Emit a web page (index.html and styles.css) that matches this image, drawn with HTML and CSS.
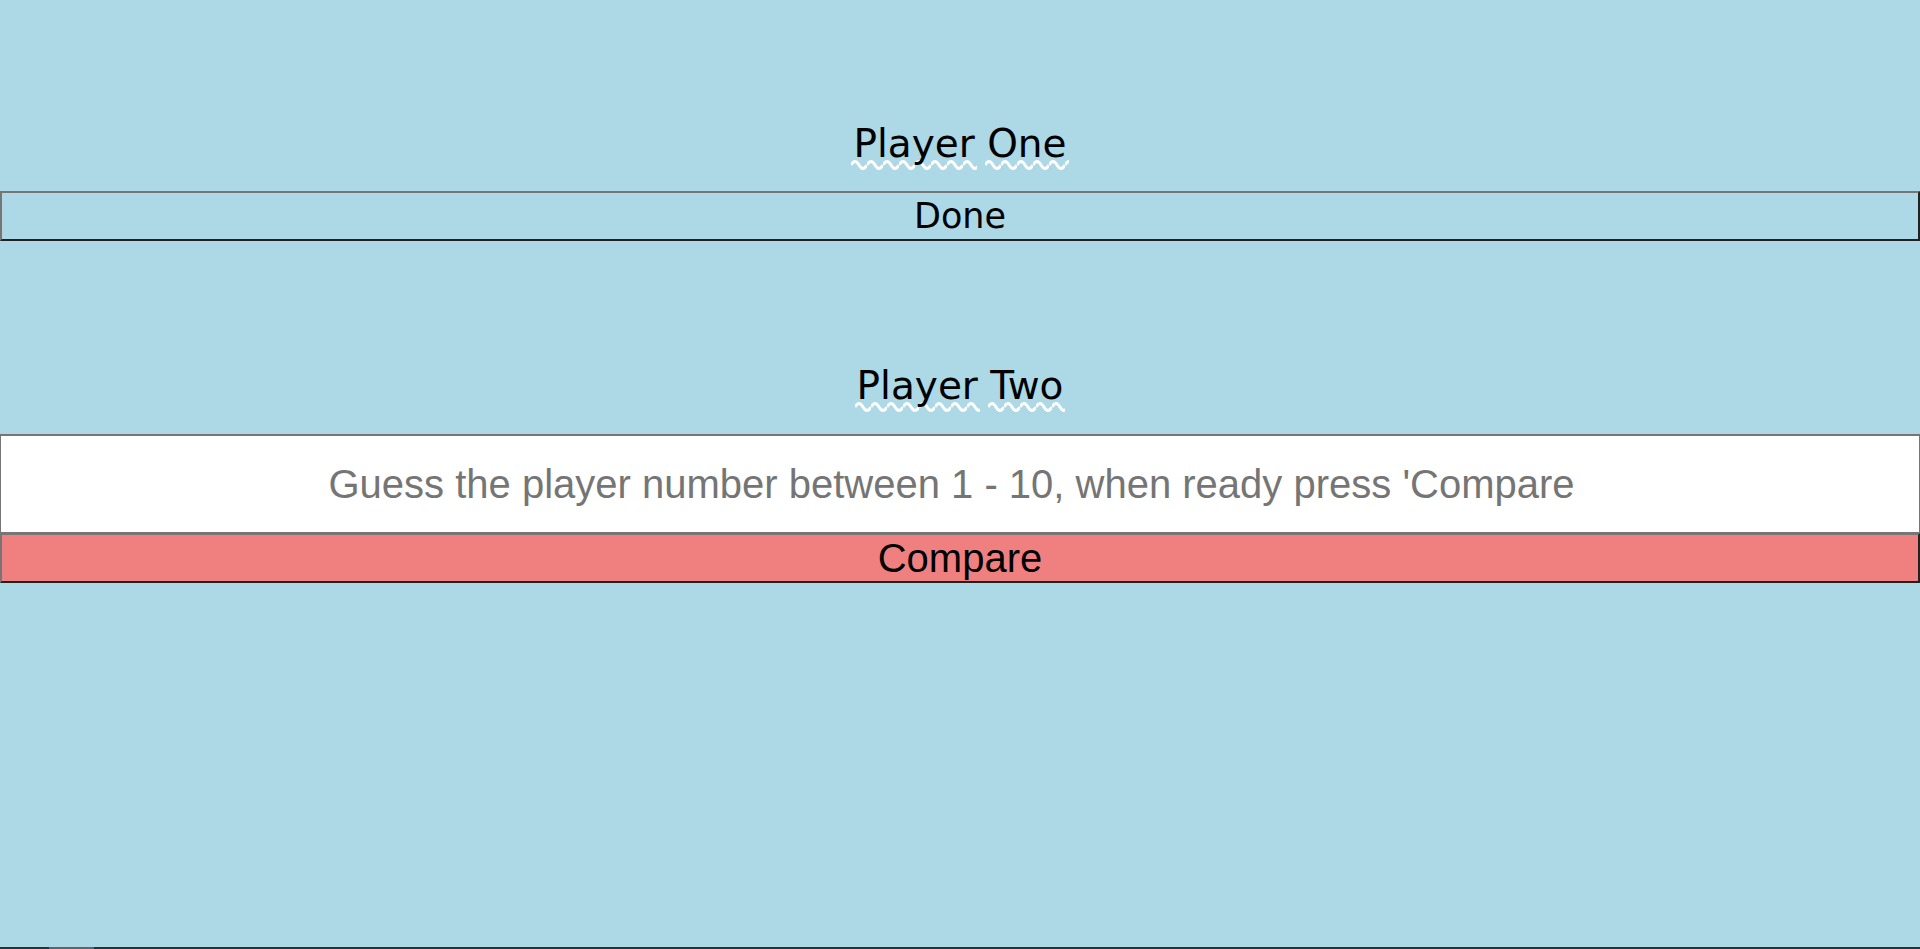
FILE: index.html
```html
<!DOCTYPE html>
<html lang="en">
<head>
<meta charset="utf-8">
<title>Guess the number</title>
<link rel="stylesheet" href="styles.css">
</head>
<body>
<main class="game">
  <section class="player player-one">
    <h2 class="title"><span class="word">Player</span> <span class="word">One</span></h2>
    <button class="btn btn-done" type="button">Done</button>
  </section>
  <section class="player player-two">
    <h2 class="title"><span class="word">Player</span> <span class="word">Two</span></h2>
    <input class="guess" type="text" placeholder="Guess the player number between 1 - 10, when ready press 'Compare">
    <button class="btn btn-compare" type="button">Compare</button>
  </section>
</main>
<div class="scrollbar"><div class="thumb"></div></div>
</body>
</html>
```
FILE: styles.css
```css
html, body {
  margin: 0;
  padding: 0;
}
body {
  background: #add8e6;
  min-height: 949px;
  overflow: hidden;
}
.game {
  display: flex;
  flex-direction: column;
  padding-top: 120px;
}
.player {
  display: flex;
  flex-direction: column;
}
.player-two {
  margin-top: 121px;
}
.title {
  margin: 0 0 23px;
  font-family: "DejaVu Sans", Verdana, sans-serif;
  font-weight: normal;
  font-size: 39px;
  line-height: 48px;
  color: #000;
  text-align: center;
}
.player-two .title {
  margin-bottom: 24px;
}
.word {
  padding: 0 2px 4px;
  margin: 0 -2px;
  background-image: url("data:image/svg+xml,%3Csvg xmlns='http://www.w3.org/2000/svg' width='16' height='10' viewBox='0 0 16 10'%3E%3Cpath d='M0 5 Q4 -2 8 5 T16 5' fill='none' stroke='white' stroke-width='3'/%3E%3C/svg%3E");
  background-repeat: repeat-x;
  background-size: 16px 10px;
  background-position: left bottom;
}
.btn {
  display: block;
  width: 100%;
  height: 50px;
  margin: 0;
  padding: 0;
  border-style: solid;
  border-width: 2px;
  border-color: #767676 #222 #222 #767676;
  color: #000;
  text-align: center;
}
.btn-done {
  background: #add8e6;
  font-family: "DejaVu Sans", Verdana, sans-serif;
  font-size: 35px;
}
.btn-compare {
  background: #f08080;
  font-family: "Liberation Sans", Arial, sans-serif;
  font-size: 40px;
}
.guess {
  display: block;
  width: 100%;
  height: 99px;
  margin: 0;
  padding: 0 17px 0 0;
  box-sizing: border-box;
  border-style: solid;
  border-color: #767676;
  border-width: 2px 1px 1px 1px;
  background: #fff;
  font-family: "Liberation Sans", Arial, sans-serif;
  font-size: 40px;
  text-align: center;
  outline: none;
}
.guess::placeholder {
  color: #757575;
}
.scrollbar {
  position: fixed;
  left: 0;
  right: 0;
  bottom: 0;
  height: 2px;
  background: #263238;
}
.thumb {
  width: 45px;
  height: 2px;
  margin-left: 49px;
  background: #5f6468;
}
```
